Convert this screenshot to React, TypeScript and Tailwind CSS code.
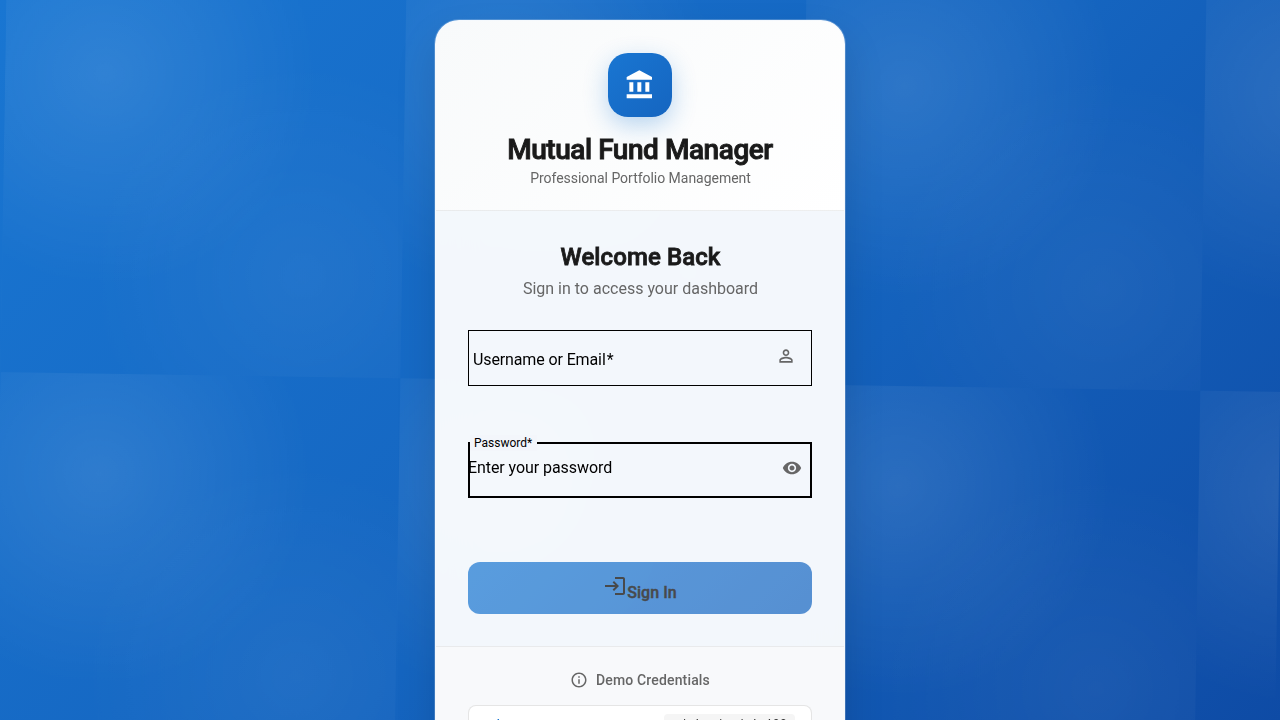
import React from "react";

function Icon({ size, className, children }: { size: number; className?: string; children: React.ReactNode }) {
  return (
    <svg width={size} height={size} viewBox="0 0 24 24" fill="currentColor" className={`block shrink-0 ${className ?? ""}`}>
      {children}
    </svg>
  );
}

const PATTERN =
  "bg-[radial-gradient(circle_at_25%_25%,rgba(255,255,255,0.1)_0%,transparent_50%),radial-gradient(circle_at_75%_75%,rgba(255,255,255,0.05)_0%,transparent_50%)] bg-[size:400px_400px]";

export default function App() {
  return (
    <div className="relative h-[720px] w-full overflow-hidden bg-[#1565c0] font-['Roboto',sans-serif] text-[#1a1a1a]">
      <div className="absolute inset-x-0 top-0 h-[864px] bg-[linear-gradient(135deg,#1976d2_0%,#1565c0_50%,#0d47a1_100%)]" />
      <div className={`absolute inset-x-0 -top-[17.9px] h-[844px] rotate-[0.888deg] ${PATTERN}`} />

      <main className="relative flex justify-center pt-5">
        <div className="h-[824px] w-[410px] overflow-hidden rounded-3xl border border-white/20 bg-white/95 shadow-[0_20px_40px_rgba(0,0,0,0.13),0_0_0_1px_rgba(255,255,255,0.2)] backdrop-blur-[20px]">
          <header className="flex h-[190px] flex-col items-center border-b border-black/[0.06] bg-[linear-gradient(135deg,#f8fafb_0%,#ffffff_100%)] pt-8">
            <div className="flex size-16 items-center justify-center rounded-[20px] bg-[linear-gradient(135deg,#1976d2_0%,#1565c0_100%)] text-white shadow-[0_8px_24px_rgba(25,118,210,0.3)]">
              <Icon size={32}>
                <path d="M4 10v7h3v-7H4zm6 0v7h3v-7h-3zM2 22h19v-3H2v3zm14-12v7h3v-7h-3zm-4.5-9L2 6v2h19V6l-9.5-5z" />
              </Icon>
            </div>
            <h1 className="mt-4 text-[28px] font-medium leading-[33.6px] tracking-[-0.45px] [-webkit-text-stroke:0.9px_#1a1a1a]">
              Mutual Fund Manager
            </h1>
            <p className="pl-px text-sm leading-[22px] tracking-[-0.03px] text-[#666]">Professional Portfolio Management</p>
          </header>

          <section className="h-[435px] px-8 pt-8">
            <h2 className="pl-px text-center text-2xl font-medium leading-[29px] tracking-[0.1px] [-webkit-text-stroke:0.8px_#1a1a1a]">Welcome Back</h2>
            <p className="mt-[5px] pl-px text-center text-base leading-6 text-[#666]">Sign in to access your dashboard</p>

            <div className="mt-[29px] flex h-14 items-center border border-black pl-1 pr-[15px] text-black">
              <span className="pt-1 text-base leading-6 tracking-[-0.12px]">
                Username or Email<span className="pl-px">*</span>
              </span>
              <Icon size={20} className="mb-1 ml-auto text-[#666]">
                <path d="M12 5.9a2.1 2.1 0 1 1 0 4.2 2.1 2.1 0 0 1 0-4.2m0 9c2.97 0 6.1 1.46 6.1 2.1v1.1H5.9V17c0-.64 3.13-2.1 6.1-2.1M12 4C9.79 4 8 5.79 8 8s1.79 4 4 4 4-1.79 4-4-1.79-4-4-4m0 9c-2.67 0-8 1.34-8 4v3h16v-3c0-2.66-5.33-4-8-4" />
              </Icon>
            </div>

            <div className="relative mt-14 flex h-14 items-center border-2 border-black text-black">
              <span className="absolute -top-[9px] left-0 h-4 w-[67px] bg-[#f3f6fb] pl-1 text-xs leading-4">Password*</span>
              <span className="-ml-[2px] mb-1 text-base leading-6 tracking-[-0.07px]">Enter your password</span>
              <Icon size={20} className="mb-1 ml-auto mr-2 text-[#666]">
                <path d="M12 4.5C7 4.5 2.73 7.61 1 12c1.73 4.39 6 7.5 11 7.5s9.27-3.11 11-7.5c-1.73-4.39-6-7.5-11-7.5zM12 17c-2.76 0-5-2.24-5-5s2.24-5 5-5 5 2.24 5 5-2.24 5-5 5zm0-8c-1.66 0-3 1.34-3 3s1.34 3 3 3 3-1.34 3-3-1.34-3-3-3z" />
              </Icon>
            </div>

            <button className="mt-16 flex h-[52px] w-full items-center justify-center rounded-xl bg-[linear-gradient(135deg,#1976d2_0%,#1565c0_100%)] text-black opacity-70">
              <Icon size={24} className="mb-1">
                <path d="M11 7 9.6 8.4l2.6 2.6H2v2h10.2l-2.6 2.6L11 17l5-5-5-5zm9 12h-8v2h8c1.1 0 2-.9 2-2V5c0-1.1-.9-2-2-2h-8v2h8v14z" />
              </Icon>
              <span className="pt-2.5 text-base font-medium leading-6 tracking-[0.05px] [-webkit-text-stroke:0.45px_#000]">Sign In</span>
            </button>
          </section>

          <footer className="border-t border-black/[0.06] bg-[#f8f9fb] px-8 pt-6">
            <div className="flex items-center justify-center gap-2 text-sm font-medium leading-[18px] text-[#666]">
              <Icon size={18}>
                <path d="M11 7h2v2h-2zm0 4h2v6h-2zm1-9C6.48 2 2 6.48 2 12s4.48 10 10 10 10-4.48 10-10S17.52 2 12 2zm0 18c-4.41 0-8-3.59-8-8s3.59-8 8-8 8 3.59 8 8-3.59 8-8 8z" />
              </Icon>
              <span className="tracking-[0.15px]">Demo Credentials</span>
            </div>
            <div className="mt-4 flex h-[110px] items-start justify-between rounded-lg border border-black/10 bg-white px-4 pt-2">
              <span className="pt-[3px] text-xs font-medium leading-4 text-[#1976d2]">Admin:</span>
              <code className="rounded bg-[#f5f5f5] px-2 py-[3px] font-['Liberation_Mono',monospace] text-xs leading-4 text-[#333]">admin / admin123</code>
            </div>
          </footer>
        </div>
      </main>
    </div>
  );
}
